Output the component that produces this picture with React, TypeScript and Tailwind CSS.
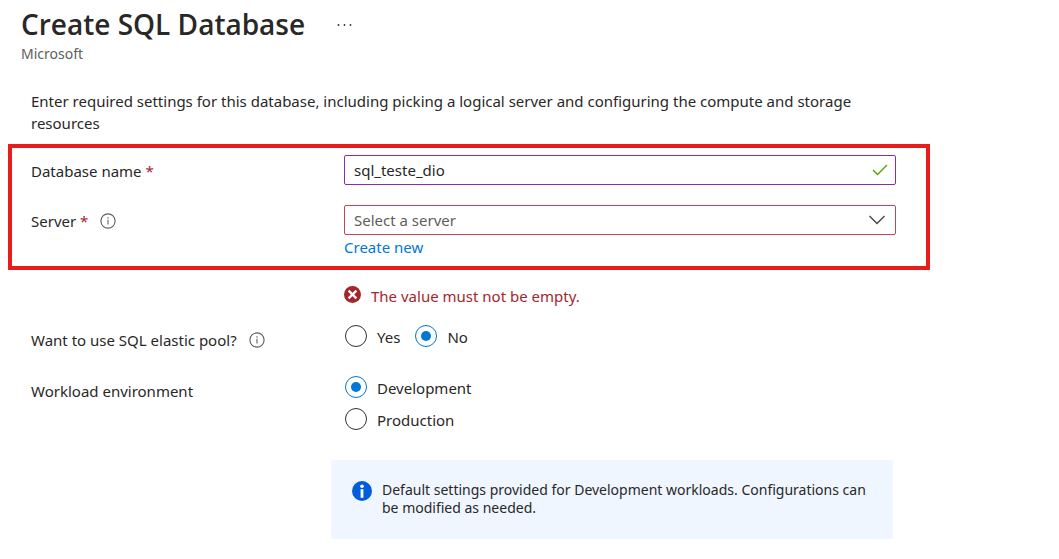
import { useState, type ReactNode } from 'react';

function InfoOutline() {
  return (
    <svg className="size-4 shrink-0" viewBox="0 0 16 16" fill="none" aria-hidden="true">
      <circle cx="8" cy="8" r="7.1" stroke="#605e5c" strokeWidth="1.1" />
      <path d="M8 6.8v4.7" stroke="#605e5c" strokeWidth="1.1" />
      <circle cx="8" cy="4.9" r="0.75" fill="#605e5c" />
    </svg>
  );
}

function Required() {
  return <span className="text-[#a4262c]"> *</span>;
}

interface RadioProps {
  name: string;
  label: string;
  checked: boolean;
  onSelect: () => void;
}

function Radio({ name, label, checked, onSelect }: RadioProps) {
  return (
    <label className="flex items-center gap-2.5">
      <input
        type="radio"
        name={name}
        checked={checked}
        onChange={onSelect}
        className="grid size-[22px] shrink-0 appearance-none place-items-center rounded-full border border-[#323130] before:size-2.5 before:rounded-full checked:border-[#0078d4] checked:before:bg-[#0078d4]"
      />
      <span className="pt-0.5">{label}</span>
    </label>
  );
}

function Row({ label, children }: { label: ReactNode; children: ReactNode }) {
  return (
    <div className="grid grid-cols-[313px_minmax(0,552px)] items-start">
      <div className="pt-[5px]">{label}</div>
      <div>{children}</div>
    </div>
  );
}

export default function App() {
  const [dbName, setDbName] = useState('sql_teste_dio');
  const [server, setServer] = useState('');
  const [pool, setPool] = useState('No');
  const [workload, setWorkload] = useState('Development');

  return (
    <main className="min-h-screen bg-white pt-1 pb-5 font-['Noto_Sans','Open_Sans',sans-serif] text-[15px] leading-[22px] text-[#292827]">
      <header className="px-[21px]">
        <div className="flex items-center gap-8">
          <h1 className="font-['Open_Sans','Noto_Sans',sans-serif] text-[28px] leading-10 font-semibold">
            Create SQL Database
          </h1>
          <button type="button" aria-label="More actions" className="flex h-5 items-center">
            <svg className="h-1 w-4" viewBox="0 0 16 4" fill="#323130" aria-hidden="true">
              <circle cx="1.5" cy="3" r="0.9" />
              <circle cx="7.5" cy="3" r="0.9" />
              <circle cx="13.5" cy="3" r="0.9" />
            </svg>
          </button>
        </div>
        <p className="text-sm leading-5 text-[#605e5c]">Microsoft</p>
      </header>

      <form className="max-w-[930px] pl-2">
        <p className="mt-[26px] mr-8 ml-[23px]">
          Enter required settings for this database, including picking a logical server and configuring the
          compute and storage resources
        </p>

        <section className="mt-2.5 flex flex-col gap-5 border-4 border-[#e91c1c] pt-[7px] pr-[30px] pb-2 pl-[19px]">
          <Row
            label={
              <label htmlFor="database-name">
                Database name
                <Required />
              </label>
            }
          >
            <div className="flex h-[30px] items-center rounded-xs border border-[#8a2da5] pr-[7px]">
              <input
                id="database-name"
                type="text"
                value={dbName}
                onChange={(e) => setDbName(e.target.value)}
                className="h-full min-w-0 grow bg-transparent px-[9px] outline-none"
              />
              <svg className="h-3 w-4" viewBox="0 0 16 12" fill="none" aria-hidden="true">
                <path d="M1 6l4.5 4.5L15 1" stroke="#57a300" strokeWidth="1.4" />
              </svg>
            </div>
          </Row>

          <Row
            label={
              <div className="flex items-center gap-3">
                <label htmlFor="server">
                  Server
                  <Required />
                </label>
                <InfoOutline />
              </div>
            }
          >
            <div className="grid h-[30px] items-center rounded-xs border border-[#b84a50]">
              <select
                id="server"
                value={server}
                onChange={(e) => setServer(e.target.value)}
                className="col-start-1 row-start-1 h-full w-full appearance-none bg-transparent px-[9px] text-[#605e5c] outline-none"
              >
                <option value="">Select a server</option>
              </select>
              <svg
                className="pointer-events-none col-start-1 row-start-1 mr-2.5 h-2.5 w-4 justify-self-end"
                viewBox="0 0 16 10"
                fill="none"
                aria-hidden="true"
              >
                <path d="M0.5 1L8 8.5L15.5 1" stroke="#484644" strokeWidth="1.4" />
              </svg>
            </div>
            <a href="#create" className="mt-px block w-fit text-[#0078d4]">
              Create new
            </a>
          </Row>
        </section>

        <div className="mt-[15px] flex flex-col pr-[34px] pl-[23px]">
          <Row label={null}>
            <p role="alert" className="flex items-start gap-2.5 text-[#a4262c]">
              <svg className="mt-px size-[17px] shrink-0" viewBox="0 0 17 17" aria-hidden="true">
                <circle cx="8.5" cy="8.5" r="8.5" fill="#a4262c" />
                <path d="M4.6 4.6l7.8 7.8M12.4 4.6l-7.8 7.8" stroke="#fff" strokeWidth="2.2" />
              </svg>
              The value must not be empty.
            </p>
          </Row>

          <div className="mt-[17px]" role="radiogroup" aria-label="Want to use SQL elastic pool?">
            <Row
              label={
                <div className="flex items-center gap-3">
                  <span>Want to use SQL elastic pool?</span>
                  <InfoOutline />
                </div>
              }
            >
              <div className="flex gap-[15px] pl-px">
                {['Yes', 'No'].map((v) => (
                  <Radio key={v} name="pool" label={v} checked={pool === v} onSelect={() => setPool(v)} />
                ))}
              </div>
            </Row>
          </div>

          <div className="mt-6" role="radiogroup" aria-label="Workload environment">
            <Row label="Workload environment">
              <div className="flex flex-col gap-2 pl-px">
                {['Development', 'Production'].map((v) => (
                  <Radio key={v} name="workload" label={v} checked={workload === v} onSelect={() => setWorkload(v)} />
                ))}
              </div>
            </Row>
          </div>
        </div>

        <aside className="mt-[29px] mr-[37px] ml-[323px] flex gap-2.5 rounded-xs bg-[#eff6ff] px-[21px] pt-[21px] pb-[22px]">
          <svg className="size-5 shrink-0" viewBox="0 0 20 20" aria-hidden="true">
            <circle cx="10" cy="10" r="10" fill="#015cda" />
            <circle cx="10" cy="5.2" r="1.8" fill="#fff" />
            <rect x="8.6" y="8.2" width="2.8" height="8.6" fill="#fff" />
          </svg>
          <p className="text-sm leading-[18px]">
            Default settings provided for Development workloads. Configurations can be modified as needed.
          </p>
        </aside>
      </form>
    </main>
  );
}
